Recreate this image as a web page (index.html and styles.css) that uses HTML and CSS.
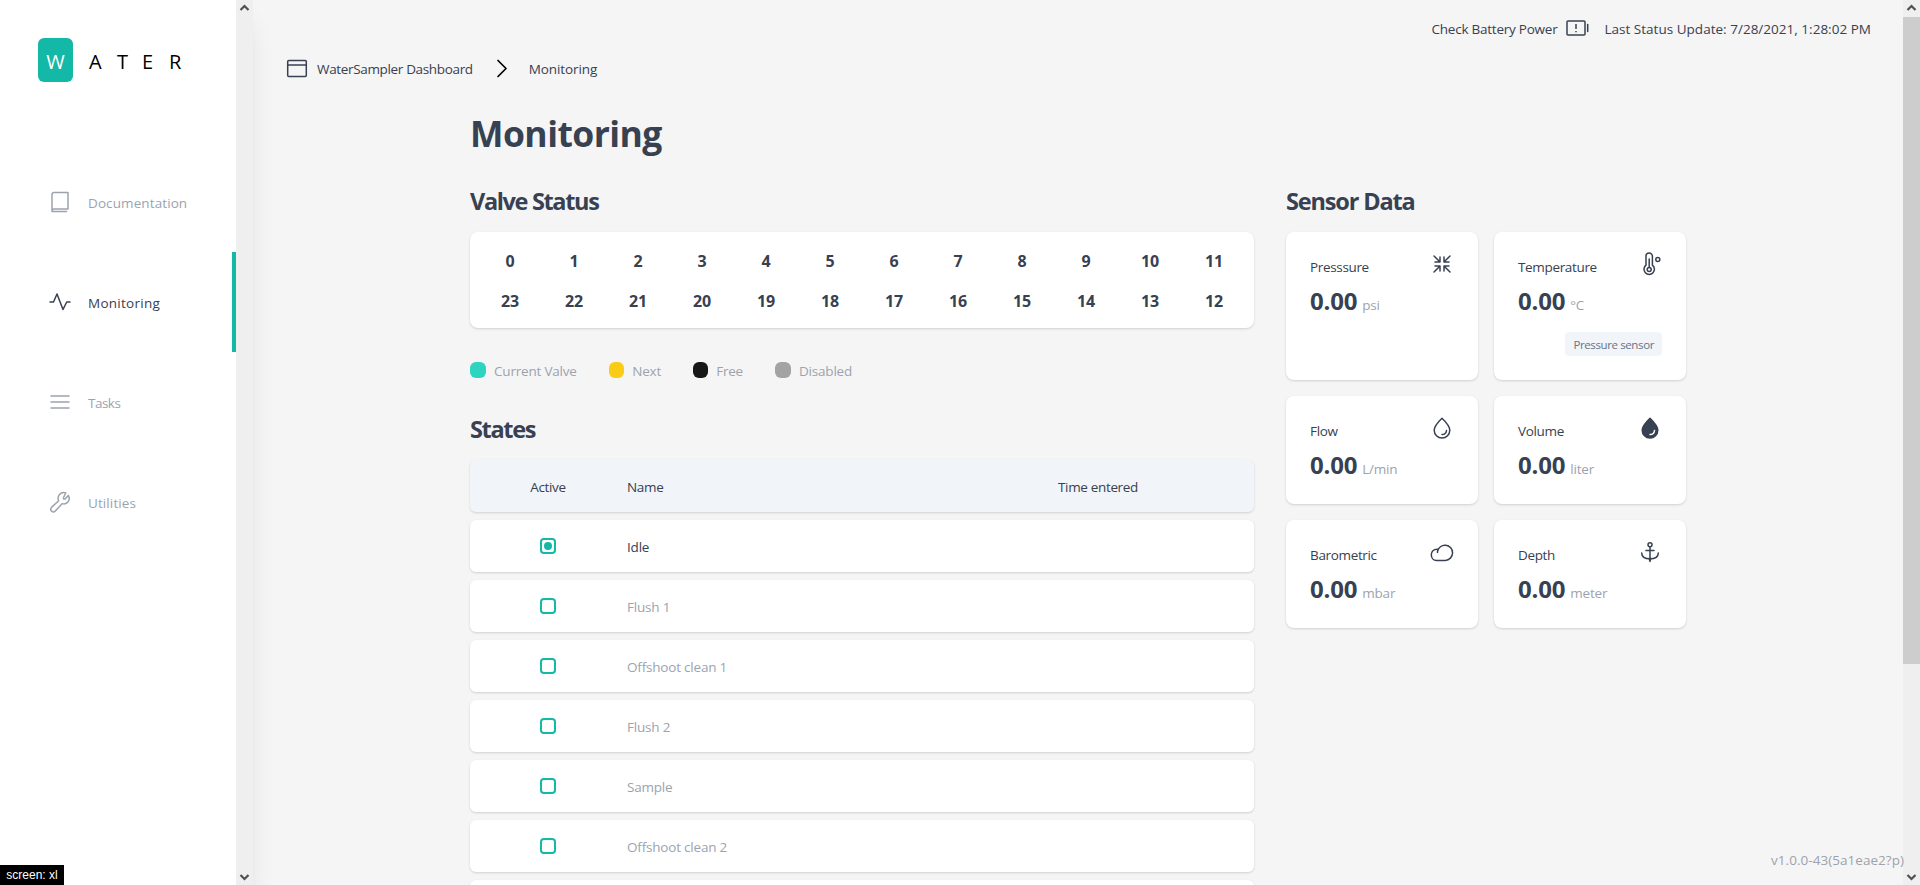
FILE: index.html
```html
<!DOCTYPE html>
<html lang="en">
<head>
<meta charset="utf-8">
<title>WaterSampler Dashboard - Monitoring</title>
<link rel="stylesheet" href="styles.css">
</head>
<body>
<div class="app">
  <aside class="sidebar">
    <div class="sidebar-body">
      <div class="logo"><span class="logo-box">W</span><span class="logo-a">A</span><span class="logo-t">T</span><span class="logo-e">E</span><span class="logo-r">R</span></div>
      <nav class="nav">
        <a class="nav-item docs"><svg width="24" height="24" viewBox="0 0 24 24"><path d="M4 19.5V4.5A2 2 0 0 1 6 2.6H20V19H6A2 2 0 0 0 4 21.5H18.5M4 19.5V21.3"/></svg><span>Documentation</span></a>
        <a class="nav-item active"><svg width="24" height="24" viewBox="0 0 24 24"><path d="M2 12H5.5L9 4L15 19.5L18.7 12H22"/></svg><span>Monitoring</span></a>
        <a class="nav-item tasks"><svg width="24" height="24" viewBox="0 0 24 24"><path d="M3 6H21M3 12H21M3 18H21"/></svg><span>Tasks</span></a>
        <a class="nav-item"><svg width="24" height="24" viewBox="0 0 24 24"><path d="M15.5 7.5v1.4h1.6l3.2-3.5c2.7 4.8-1.3 9.6-6 8.2l-7 7.4a2.5 2.5 0 0 1-3.8-3.6l7.2-6.6C8.500 6.200 12.700 1.300 17.800 3z"/></svg><span>Utilities</span></a>
      </nav>
    </div>
    <div class="scrollbar"><svg width="17" height="17" viewBox="0 0 17 17"><path d="M4.500 10L8.500 6L12.500 10"/></svg><svg width="17" height="17" viewBox="0 0 17 17"><path d="M4.500 7L8.500 11L12.500 7"/></svg></div>
  </aside>

  <main class="main">
    <div class="statusbar">
      <span class="battery">Check Battery Power</span>
      <svg width="24" height="24" viewBox="0 0 24 24"><rect x="2" y="5" width="18" height="14" rx="1"/><path d="M22.700 8.500V15.500"/><path class="mark" d="M11 8V13M11 15V16.300"/></svg>
      <span class="updated">Last Status Update: 7/28/2021, 1:28:02 PM</span>
    </div>
    <div class="crumbs">
      <svg width="24" height="24" viewBox="0 0 24 24"><rect x="2.700" y="4.600" width="18.600" height="15.800" rx="1"/><path d="M3 9H21"/></svg>
      <span>WaterSampler Dashboard</span>
      <svg class="chevron" width="24" height="24" viewBox="0 0 24 24"><path d="M8 4.500L16 12.500L8 20.500"/></svg>
      <span class="here">Monitoring</span>
    </div>

    <div class="content">
      <h1>Monitoring</h1>
      <div class="columns">
        <section class="left">
          <h2>Valve Status</h2>
          <div class="card valves">
            <span>0</span><span>1</span><span>2</span><span>3</span><span>4</span><span>5</span><span>6</span><span>7</span><span>8</span><span>9</span><span>10</span><span>11</span>
            <span>23</span><span>22</span><span>21</span><span>20</span><span>19</span><span>18</span><span>17</span><span>16</span><span>15</span><span>14</span><span>13</span><span>12</span>
          </div>
          <div class="legend">
            <div class="key current"><i></i><span>Current Valve</span></div>
            <div class="key next"><i></i><span>Next</span></div>
            <div class="key free"><i></i><span>Free</span></div>
            <div class="key disabled"><i></i><span>Disabled</span></div>
          </div>
          <h2 class="states-title">States</h2>
          <div class="states">
            <div class="row head"><span class="c-active">Active</span><span class="c-name">Name</span><span class="c-time">Time entered</span></div>
            <div class="row on"><span class="c-active"><i class="box"></i></span><span class="c-name">Idle</span></div>
            <div class="row"><span class="c-active"><i class="box"></i></span><span class="c-name">Flush 1</span></div>
            <div class="row"><span class="c-active"><i class="box"></i></span><span class="c-name">Offshoot clean 1</span></div>
            <div class="row"><span class="c-active"><i class="box"></i></span><span class="c-name">Flush 2</span></div>
            <div class="row"><span class="c-active"><i class="box"></i></span><span class="c-name">Sample</span></div>
            <div class="row"><span class="c-active"><i class="box"></i></span><span class="c-name">Offshoot clean 2</span></div>
            <div class="row"></div>
          </div>
        </section>

        <section class="right">
          <h2>Sensor Data</h2>
          <div class="sensors">
            <div class="card sensor">
              <div class="sensor-top"><span>Presssure</span><svg width="24" height="24" viewBox="0 0 24 24"><path d="M4 4L9.800 9.800M20 4L14.200 9.800M4 20L9.800 14.200M20 20L14.200 14.200M10 5V10H5M14 5V10H19M10 19V14H5M14 19V14H19"/></svg></div>
              <div class="reading"><b>0.00</b><span>psi</span></div>
            </div>
            <div class="card sensor">
              <div class="sensor-top"><span>Temperature</span><svg width="24" height="24" viewBox="0 0 24 24"><path d="M8 13.200V4.200a3.200 3.200 0 0 1 6.400 0V13.200a5.200 5.200 0 1 1-6.400 0zM11.200 7V15.500"/><circle cx="11.200" cy="17.500" r="2"/><circle cx="19.800" cy="7.500" r="2"/></svg></div>
              <div class="reading"><b>0.00</b><span>°C</span></div>
              <div class="tag">Pressure sensor</div>
            </div>
            <div class="card sensor">
              <div class="sensor-top"><span>Flow</span><svg width="24" height="24" viewBox="0 0 24 24"><path d="M12 2.200C8 6 4.200 10.400 4.200 14.300a7.800 7.800 0 0 0 15.600 0C19.800 10.400 16 6 12 2.200zM16.500 14.500a4.500 4.500 0 0 1-4.500 4"/></svg></div>
              <div class="reading"><b>0.00</b><span>L/min</span></div>
            </div>
            <div class="card sensor">
              <div class="sensor-top"><span>Volume</span><svg width="24" height="24" viewBox="0 0 24 24"><path class="solid" d="M12 2.200C8 6 4.200 10.400 4.200 14.300a7.800 7.800 0 0 0 15.600 0C19.800 10.400 16 6 12 2.200z"/><path class="shine" d="M16.500 14.500a4.500 4.500 0 0 1-4.500 4"/></svg></div>
              <div class="reading"><b>0.00</b><span>liter</span></div>
            </div>
            <div class="card sensor">
              <div class="sensor-top"><span>Barometric</span><svg width="24" height="24" viewBox="0 0 24 24"><path d="M6 20.400H15.300A7.600 7.600 0 1 0 7.500 11.500V12.500M7.600 9.200C3.500 8.900 1.300 11.700 1.300 14.700C1.300 18 3.500 20.400 6.500 20.400"/></svg></div>
              <div class="reading"><b>0.00</b><span>mbar</span></div>
            </div>
            <div class="card sensor">
              <div class="sensor-top"><span>Depth</span><svg width="24" height="24" viewBox="0 0 24 24"><circle cx="12" cy="4.800" r="2"/><path d="M12 7V21.500M8 10.500H16M3.700 13C3.700 17 7.500 18.800 12 18.800S20.300 17 20.300 13M11 19L12 21L13 19"/></svg></div>
              <div class="reading"><b>0.00</b><span>meter</span></div>
            </div>
          </div>
        </section>
      </div>
    </div>
  </main>

  <div class="scrollbar"><svg width="17" height="17" viewBox="0 0 17 17"><path d="M4.500 10L8.500 6L12.500 10"/></svg><div class="thumb"></div><svg class="down" width="17" height="17" viewBox="0 0 17 17"><path d="M4.500 7L8.500 11L12.500 7"/></svg></div>
</div>
<div class="screen">screen: xl</div>
<div class="version">v1.0.0-43(5a1eae2?p)</div>
</body>
</html>
```

FILE: styles.css
```css
* { box-sizing: border-box; }

body {
  margin: 0;
  height: 885px;
  overflow: hidden;
  background: #f5f5f5;
  color: #374151;
  font-family: "Open Sans", "Noto Sans", sans-serif;
  font-size: 13.5px;
  line-height: 20px;
  letter-spacing: -0.34px;
}

svg {
  display: block;
  flex: none;
  fill: none;
  stroke: currentColor;
  stroke-width: 1.5;
  stroke-linecap: round;
  stroke-linejoin: round;
}

h1, h2 { margin: 0; font-weight: 700; }
h1 { font-size: 35.5px; line-height: 40px; letter-spacing: -0.55px; }
h2 { font-size: 23.5px; line-height: 32px; letter-spacing: -1.35px; }
.right h2 { letter-spacing: -1.15px; }

.app { display: flex; height: 885px; }

/* Sidebar */
.sidebar {
  display: flex;
  flex: none;
  width: 253px;
  background: #fff;
  box-shadow: 0 20px 25px -5px rgba(0, 0, 0, .1), 0 10px 10px -5px rgba(0, 0, 0, .04);
}
.sidebar-body { width: 236px; }
.logo {
  display: flex;
  align-items: center;
  height: 44px;
  margin: 38px 0 0 38px;
  color: #000;
  font-size: 20px;
  letter-spacing: 0;
}
.logo-box {
  width: 35px;
  height: 44px;
  margin-right: 16px;
  border-radius: 6px;
  background: #14b8a6;
  color: #fff;
  line-height: 47px;
  text-align: center;
}
.logo-a, .logo-t, .logo-e, .logo-r { padding-top: 3px; }
.logo-a { width: 28px; }
.logo-t { width: 25px; }
.logo-e { width: 27px; }
.nav { margin-top: 70px; }
.nav-item {
  display: flex;
  align-items: center;
  gap: 16px;
  height: 100px;
  padding-left: 48px;
  color: #9ca3af;
  letter-spacing: 0.1px;
}
.nav-item span { padding-top: 1px; }
.nav-item.active { color: #374151; border-right: 4px solid #14b8a6; letter-spacing: 0.27px; }
.nav-item.tasks { letter-spacing: -0.5px; }

.scrollbar {
  display: flex;
  flex: none;
  flex-direction: column;
  justify-content: space-between;
  width: 17px;
  background: #efefef;
  color: #505050;
}
.scrollbar svg { stroke-width: 2.2; stroke-linecap: butt; stroke-linejoin: miter; }
.thumb { height: 647px; background: #cdcdcd; }
.down { margin-top: auto; }

/* Main */
.main { flex: 1; min-width: 0; overflow: hidden; }
.statusbar {
  display: flex;
  align-items: center;
  justify-content: flex-end;
  height: 24px;
  margin-top: 16px;
  padding-right: 32px;
}
.statusbar svg { margin: 0 15px 0 8px; }
.statusbar .mark { stroke-linecap: butt; }
.battery, .updated { padding-top: 1px; }
.battery { letter-spacing: -0.24px; }
.updated { letter-spacing: 0.02px; }
.crumbs {
  display: flex;
  align-items: center;
  height: 24px;
  margin-top: 16px;
  padding-left: 32px;
}
.crumbs span { margin-left: 8px; padding-top: 2px; }
.crumbs .chevron { margin: 0 7px 0 17px; color: #000; stroke-width: 1.7; }
.crumbs .here { letter-spacing: -0.1px; }

.content { width: 1216px; margin: 33px 0 0 217px; }
.columns { display: flex; gap: 32px; margin-top: 32px; }
.left { width: 784px; }
.right { width: 400px; }

.card {
  border-radius: 8px;
  background: #fff;
  box-shadow: 0 1px 3px rgba(0, 0, 0, .1), 0 1px 2px rgba(0, 0, 0, .06);
}
.valves {
  display: grid;
  grid-template-columns: repeat(12, 64px);
  grid-auto-rows: 40px;
  height: 96px;
  margin-top: 15px;
  padding: 9px 8px;
  font-size: 16px;
  font-weight: 700;
  line-height: 41px;
  letter-spacing: -0.1px;
  text-align: center;
}

.legend { display: flex; gap: 32px; height: 20px; margin-top: 32px; color: #9ca3af; letter-spacing: -0.2px; }
.key { display: flex; align-items: center; gap: 8px; }
.key span { padding-top: 2px; }
.key i { width: 16px; height: 16px; border-radius: 6px; }
.current { width: 107px; }
.next { width: 52px; }
.free { width: 50px; }
.current i { background: #2dd4bf; }
.next i { background: #facc15; }
.free i { background: #171717; }
.disabled i { background: #a3a3a3; }

.states-title { margin-top: 33px; }
.states { display: grid; gap: 8px; margin-top: 15px; }
.row {
  display: flex;
  align-items: center;
  height: 52px;
  border-radius: 6px;
  background: #fff;
  box-shadow: 0 1px 3px rgba(0, 0, 0, .1), 0 1px 2px rgba(0, 0, 0, .06);
  color: #9ca3af;
  letter-spacing: -0.2px;
}
.head { background: #f1f5f9; letter-spacing: -0.34px; }
.head, .on { color: #374151; }
.c-active { display: flex; flex: none; justify-content: center; width: 157px; padding-right: 1px; }
.c-name { flex: none; width: 431px; padding-top: 2px; }
.head .c-active, .c-time { padding-top: 2px; }
.box {
  display: flex;
  align-items: center;
  justify-content: center;
  width: 16px;
  height: 16px;
  border: 2px solid #14b8a6;
  border-radius: 4px;
}
.on .box::after { content: ""; width: 8px; height: 8px; border-radius: 50%; background: #14b8a6; }

/* Sensors */
.sensors {
  display: grid;
  grid-template-columns: 192px 192px;
  grid-template-rows: 148px 108px 108px;
  gap: 16px;
  margin-top: 15px;
}
.sensor { padding: 20px 24px; }
.sensor-top { display: flex; justify-content: space-between; height: 33px; }
.sensor-top span { padding-top: 5px; }
.reading { display: flex; align-items: baseline; gap: 5px; height: 32px; line-height: 32px; }
.reading b { font-size: 24px; letter-spacing: -0.2px; }
.reading span { color: #9ca3af; letter-spacing: -0.2px; }
.tag {
  width: fit-content;
  height: 24px;
  margin: 15px 0 0 auto;
  padding: 1px 8px;
  border-radius: 4px;
  background: #f1f5f9;
  color: #64748b;
  font-size: 11.5px;
  line-height: 24px;
  letter-spacing: -0.38px;
}
.solid { fill: currentColor; }
.shine { stroke: #fff; }

/* Fixed overlays */
.screen {
  position: absolute;
  left: 0;
  bottom: 0;
  width: 64px;
  height: 20px;
  background: #000;
  color: #fff;
  font: 12px/20px "Liberation Sans", sans-serif;
  letter-spacing: 0;
  text-align: center;
}
.version {
  position: absolute;
  right: 16px;
  bottom: 15px;
  color: #9ca3af;
  letter-spacing: 0.04px;
}
```
